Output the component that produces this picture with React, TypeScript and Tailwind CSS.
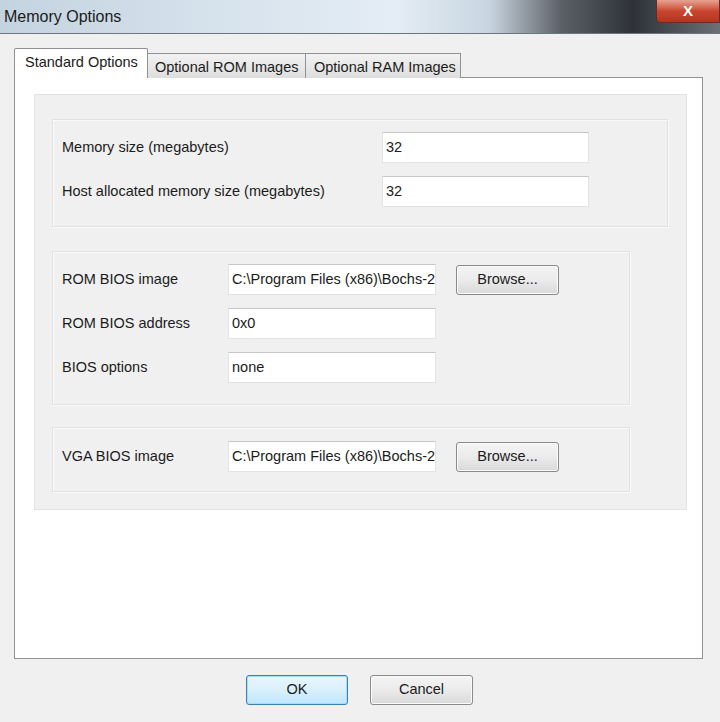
import React from 'react';

const font = { fontFamily: '"Liberation Sans", Arial, sans-serif' };

function Field({ value, className = '' }: { value: string; className?: string }) {
  return (
    <div
      className={`h-[31px] bg-white border border-[#e2e3e5] border-t-[#c5c6c8] pl-[3px] pt-[5px] text-[14.5px] leading-[18px] text-[#1b1b1b] whitespace-nowrap overflow-hidden ${className}`}
    >
      {value}
    </div>
  );
}

function Browse() {
  return (
    <button className="w-[103px] h-[30px] rounded-[3px] border border-[#8a8a8a] bg-gradient-to-b from-[#f4f4f4] via-[#ebebeb] to-[#d9d9d9] text-[14.5px] text-[#1b1b1b] shadow-[inset_0_0_0_1px_#fbfbfb]">
      Browse...
    </button>
  );
}

function Group({ className = '', children }: { className?: string; children: React.ReactNode }) {
  return (
    <div className={`border border-[#e1e1e1] shadow-[inset_1px_1px_0_#fafafa,1px_1px_0_#fafafa] ${className}`}>
      {children}
    </div>
  );
}

// the path is longer than the box, so it gets clipped at the right edge
const pathValue = 'C:\\Program Files (x86)\\Bochs-2';

export default function App() {
  return (
    <div className="w-[720px] h-[722px] bg-[#f0f0f0] flex flex-col overflow-hidden" style={font}>
      {/* aero title bar */}
      <div className="h-[34px] flex items-start justify-between bg-[linear-gradient(90deg,#c4d3e0_0%,#d6e2ec_30%,#e4edf5_55%,#c8d5e0_68%,#5b6067_78%,#2e3238_88%,#6c7178_100%)] border-b border-[#6d7680]">
        <span className="pl-[4px] pt-[5px] text-[16px] text-[#1a1a1a]">Memory Options</span>
        <div className="w-[64px] h-[23px] rounded-bl-[5px] border border-t-0 border-[#6b2a22] bg-gradient-to-b from-[#e6a291] via-[#c9452f] to-[#b23520] flex items-center justify-center text-white text-[15px] font-bold">
          X
        </div>
      </div>

      <div className="flex-1 flex flex-col pl-[14px] pr-[17px] pt-[14px]">
        {/* tab strip */}
        <div className="flex items-end h-[30px] relative z-10 -mb-px">
          <div className="h-[30px] w-[134px] bg-white border border-b-0 border-[#8e9196] rounded-t-[2px] pl-[10px] pt-[3px] text-[14.5px] text-[#1b1b1b]">
            Standard Options
          </div>
          <div className="h-[25px] w-[158px] border border-b-0 border-l-0 border-[#8e9196] bg-gradient-to-b from-[#f2f2f2] to-[#dedede] pl-[7px] pt-[3px] text-[14.5px] text-[#1b1b1b]">
            Optional ROM Images
          </div>
          <div className="h-[25px] w-[155px] border border-b-0 border-l-0 border-[#8e9196] bg-gradient-to-b from-[#f2f2f2] to-[#dedede] pl-[8px] pt-[3px] text-[14.5px] text-[#1b1b1b]">
            Optional RAM Images
          </div>
        </div>

        {/* tab page */}
        <div className="h-[582px] bg-white border border-[#8e9196] pl-[19px] pr-[15px] pt-[16px]">
          <div className="h-[416px] bg-[#f0f0f0] border border-[#e4e4e4] pl-[17px] pt-[24px] flex flex-col">
            <Group className="w-[616px] h-[108px] pl-[9px] pt-[12px] flex flex-col gap-[13px]">
              <div className="flex items-center">
                <span className="w-[320px] text-[14.5px] text-[#1b1b1b]">Memory size (megabytes)</span>
                <Field value="32" className="w-[207px]" />
              </div>
              <div className="flex items-center">
                <span className="w-[320px] text-[14.5px] text-[#1b1b1b]">Host allocated memory size (megabytes)</span>
                <Field value="32" className="w-[207px]" />
              </div>
            </Group>

            <Group className="mt-[24px] w-[578px] h-[154px] pl-[9px] pt-[12px] flex flex-col gap-[13px]">
              <div className="flex items-center">
                <span className="w-[166px] text-[14.5px] text-[#1b1b1b]">ROM BIOS image</span>
                <Field value={pathValue} className="w-[208px]" />
                <div className="ml-[20px]">
                  <Browse />
                </div>
              </div>
              <div className="flex items-center">
                <span className="w-[166px] text-[14.5px] text-[#1b1b1b]">ROM BIOS address</span>
                <Field value="0x0" className="w-[208px]" />
              </div>
              <div className="flex items-center">
                <span className="w-[166px] text-[14.5px] text-[#1b1b1b]">BIOS options</span>
                <Field value="none" className="w-[208px]" />
              </div>
            </Group>

            <Group className="mt-[22px] w-[578px] h-[65px] pl-[9px] pt-[13px]">
              <div className="flex items-center">
                <span className="w-[166px] text-[14.5px] text-[#1b1b1b]">VGA BIOS image</span>
                <Field value={pathValue} className="w-[208px]" />
                <div className="ml-[20px]">
                  <Browse />
                </div>
              </div>
            </Group>
          </div>
        </div>

        {/* dialog buttons */}
        <div className="flex justify-center gap-[22px] pt-[16px] pl-[2px]">
          <button className="w-[102px] h-[30px] rounded-[3px] border border-[#3c7fb1] bg-gradient-to-b from-[#eaf6fd] via-[#d9f0fc] to-[#bee6fd] shadow-[inset_0_0_0_1px_#a8dcf7] text-[14.5px] text-[#1b1b1b]">
            OK
          </button>
          <button className="w-[103px] h-[30px] rounded-[3px] border border-[#8a8a8a] bg-gradient-to-b from-[#f4f4f4] via-[#ebebeb] to-[#d9d9d9] shadow-[inset_0_0_0_1px_#fbfbfb] text-[14.5px] text-[#1b1b1b]">
            Cancel
          </button>
        </div>
      </div>
    </div>
  );
}
